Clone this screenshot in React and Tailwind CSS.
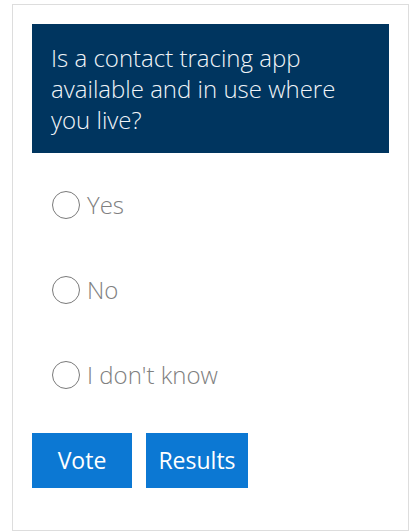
import { useState } from "react";

const options = ["Yes", "No", "I don't know"];

const PollCard = () => {
    const [choice, setChoice] = useState(null);

    return (
        <div className="pl-[12px] pt-[4px] font-['Open_Sans',sans-serif]">
            <div className="w-[397px] h-[527px] border border-[#dddddd] bg-white px-[19px] pt-[19px]">
                <div className="bg-[#00355f] px-[19px] py-[18px] text-[24px] leading-[31px] font-light text-[#f0f4f8]">
                    Is a contact tracing app available and in use where you live?
                </div>

                <div className="mt-[9px] flex flex-col">
                    {options.map((opt) => (
                        <label key={opt} className="h-[85px] flex items-center cursor-pointer">
                            <span
                                onClick={() => setChoice(opt)}
                                className="ml-[20px] size-[28px] rounded-full border border-[#7a7a7a] flex items-center justify-center"
                            >
                                {choice === opt && <span className="size-[14px] rounded-full bg-[#7a7a7a]" />}
                            </span>
                            <span className="ml-[7px] text-[24px] font-light text-[#808080]">{opt}</span>
                        </label>
                    ))}
                </div>

                <div className="mt-[16px] flex gap-[14px]">
                    <button className="w-[100px] h-[55px] bg-[#0c78d3] text-white text-[23px]">Vote</button>
                    <button className="w-[102px] h-[55px] bg-[#0c78d3] text-white text-[23px]">Results</button>
                </div>
            </div>
        </div>
    );
};

export default function App() {
    return <PollCard />;
}
